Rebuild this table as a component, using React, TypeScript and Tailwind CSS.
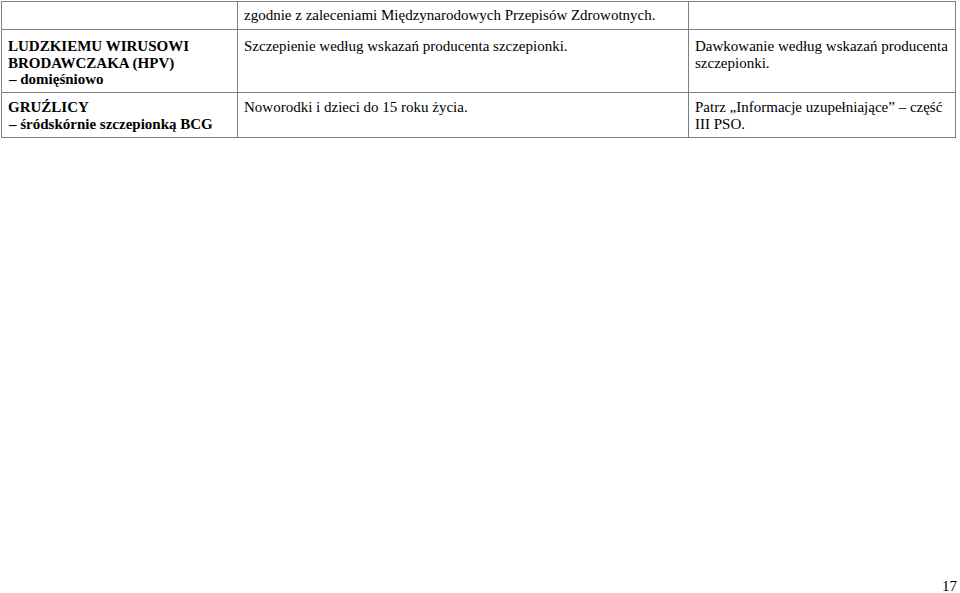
export default function App() {
  return (
    <div className="relative h-[593px] w-[960px] bg-white font-['Liberation_Serif',serif] text-[15px] leading-[16.5px] text-black">
      <table className="ml-px mt-px w-[954px] table-fixed border-collapse">
        <colgroup>
          <col className="w-[236px]" />
          <col className="w-[451px]" />
          <col className="w-[267px]" />
        </colgroup>
        <tbody>
          {/* continued row */}
          <tr className="h-[28px]">
            <td className="border border-[#7f7f7f] px-[6px] align-top"></td>
            <td className="border border-[#7f7f7f] px-[6px] pt-[5px] align-top">
              zgodnie z zaleceniami Międzynarodowych Przepisów Zdrowotnych.
            </td>
            <td className="border border-[#7f7f7f] px-[6px] align-top"></td>
          </tr>
          {/* HPV */}
          <tr className="h-[63px]">
            <td className="border border-[#7f7f7f] px-[6px] pt-[8px] align-top font-bold">
              LUDZKIEMU WIRUSOWI
              <br />
              BRODAWCZAKA (HPV)
              <br />
              <span className="pl-px">– domięśniowo</span>
            </td>
            <td className="border border-[#7f7f7f] px-[6px] pt-[8px] align-top">
              Szczepienie według wskazań producenta szczepionki.
            </td>
            <td className="border border-[#7f7f7f] px-[6px] pt-[8px] align-top">
              Dawkowanie według wskazań producenta szczepionki.
            </td>
          </tr>
          {/* BCG */}
          <tr className="h-[45px]">
            <td className="border border-[#7f7f7f] px-[6px] pt-[6px] align-top font-bold">
              GRUŹLICY
              <br />
              <span className="pl-px">– śródskórnie szczepionką BCG</span>
            </td>
            <td className="border border-[#7f7f7f] px-[6px] pt-[6px] align-top">
              Noworodki i dzieci do 15 roku życia.
            </td>
            <td className="border border-[#7f7f7f] px-[6px] pt-[6px] align-top">
              Patrz „Informacje uzupełniające” – część III PSO.
            </td>
          </tr>
        </tbody>
      </table>
      <div className="absolute bottom-0 right-[3px] text-[15px]">17</div>
    </div>
  );
}
